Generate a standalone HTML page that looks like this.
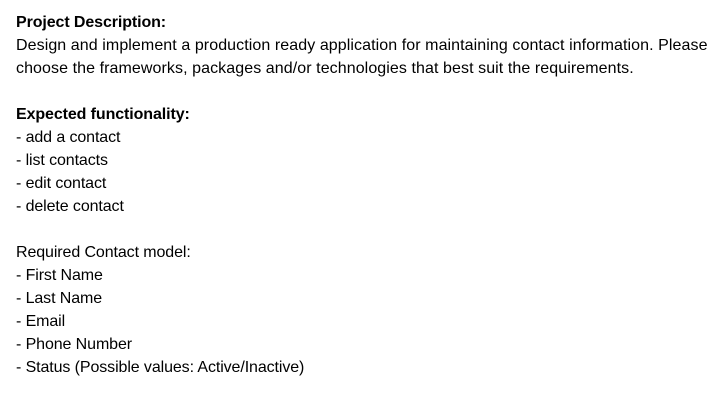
<!DOCTYPE html>
<html><head><meta charset="utf-8"><style>
html,body{margin:0;padding:0;background:#fff;width:725px;height:401px;overflow:hidden}
.t{position:absolute;left:16px;top:11px;font-family:"Liberation Sans",Arial,sans-serif;font-size:16px;line-height:23px;color:#000;white-space:pre;letter-spacing:-0.1px}
b{font-weight:bold}
.w{letter-spacing:0.08px}
</style></head><body>
<div class="t"><b>Project Description:</b>
<span class="w">Design and implement a production ready application for maintaining contact information. Please</span>
<span class="w">choose the frameworks, packages and/or technologies that best suit the requirements.</span>

<b>Expected functionality:</b>
- add a contact
- list contacts
- edit contact
- delete contact

Required Contact model:
- First Name
- Last Name
- Email
- Phone Number
- Status (Possible values: Active/Inactive)</div>
</body></html>
